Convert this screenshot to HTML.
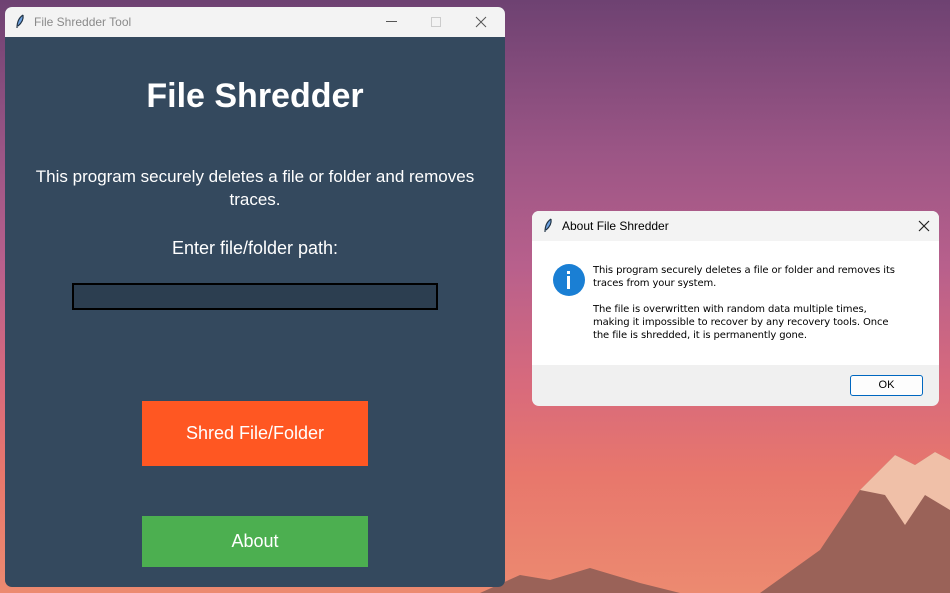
<!DOCTYPE html>
<html><head><style>
*{margin:0;padding:0;box-sizing:border-box}
body{width:950px;height:593px;overflow:hidden;position:relative;font-family:"Liberation Sans",sans-serif;
background:linear-gradient(180deg,#6e4272 0%,#9a5585 25%,#b8608c 45%,#d86a7c 65%,#e8776c 80%,#ec8a70 100%);}
.win{position:absolute;left:5px;top:7px;width:500px;height:580px;background:#34495e;border-radius:7px;overflow:hidden}
.tb{height:30px;background:#f3f3f3;position:relative;font-size:12px;color:#8a8a8a}
.tb span{position:absolute;left:29px;top:8px}
h1{position:absolute;left:0;width:500px;top:70px;text-align:center;color:#fff;font-size:34px;font-weight:bold}
.p{position:absolute;color:#fff;font-size:17px;text-align:center;width:500px;left:0}
.inp{position:absolute;left:67px;top:276px;width:366px;height:27px;background:#2c3e50;border:2px solid #000}
.btn{position:absolute;left:137px;width:226px;color:#fff;font-size:18px;text-align:center}
.dlg{position:absolute;left:532px;top:211px;width:407px;height:195px;background:#f0f0f0;border-radius:7px;overflow:hidden}
.dt{height:30px;background:#f3f3f3;font-size:12px;color:#000;position:relative}
.db{height:124px;background:#fff;position:relative}
.msg{position:absolute;left:61px;top:23px;font-size:10px;line-height:13px;color:#000;font-family:"DejaVu Sans",sans-serif;letter-spacing:-0.1px}
.ok{position:absolute;left:318px;top:164px;width:73px;height:21px;border:1px solid #0067c0;border-radius:3px;background:#fdfdfd;font-size:11px;text-align:center;line-height:19px}
</style></head><body>
<svg style="position:absolute;left:700px;top:440px" width="250" height="153"><path d="M60 153 L120 110 L160 50 L195 15 L215 25 L235 12 L250 20 L250 153Z" fill="#9a6258"/><path d="M160 50 L195 15 L215 25 L235 12 L250 20 L250 70 L225 55 L205 85 L185 55Z" fill="#f0c0a8"/></svg>
<svg style="position:absolute;left:480px;top:565px" width="200" height="28"><path d="M0 28 L40 10 L70 15 L110 3 L160 18 L200 28Z" fill="#9a6258"/></svg>
<div class="win">
<div class="tb"><svg style="position:absolute;left:10px;top:7px" width="10" height="16"><path d="M8 1 Q2 5 2 14 M8 1 Q9 7 3 12" stroke="#234" fill="#6aa0e0" stroke-width="1.2"/></svg><span>File Shredder Tool</span>
<div style="position:absolute;left:381px;top:14px;width:11px;height:1px;background:#555"></div>
<div style="position:absolute;left:426px;top:10px;width:10px;height:10px;border:1px solid #ccc"></div>
<svg style="position:absolute;left:470px;top:9px" width="12" height="12"><path d="M1 1L11 11M11 1L1 11" stroke="#555" stroke-width="1"/></svg></div>
<h1>File Shredder</h1>
<div class="p" style="top:158px;line-height:23px;padding:0 25px">This program securely deletes a file or folder and removes traces.</div>
<div class="p" style="top:231px;font-size:18px">Enter file/folder path:</div>
<div class="inp"></div>
<div class="btn" style="top:394px;height:65px;line-height:65px;background:#ff5722">Shred File/Folder</div>
<div class="btn" style="top:509px;height:51px;line-height:51px;background:#4caf50">About</div>
</div>
<div class="dlg">
<div class="dt"><svg style="position:absolute;left:11px;top:7px" width="10" height="16"><path d="M8 1 Q2 5 2 14 M8 1 Q9 7 3 12" stroke="#234" fill="#6aa0e0" stroke-width="1.2"/></svg><span style="position:absolute;left:30px;top:8px">About File Shredder</span><svg style="position:absolute;left:386px;top:9px" width="12" height="12"><path d="M1 1L11 11M11 1L1 11" stroke="#222" stroke-width="1.2"/></svg></div>
<div class="db"><div style="position:absolute;left:21px;top:23px;width:32px;height:32px;border-radius:50%;background:#1a7fd4"><div style="position:absolute;left:14px;top:7px;width:3px;height:3px;background:#fff"></div><div style="position:absolute;left:14px;top:12px;width:3px;height:13px;background:#fff"></div></div>
<div class="msg">This program securely deletes a file or folder and removes its<br>traces from your system.<br><br>The file is overwritten with random data multiple times,<br>making it impossible to recover by any recovery tools. Once<br>the file is shredded, it is permanently gone.</div></div>
<div class="ok">OK</div>
</div>
</body></html>
